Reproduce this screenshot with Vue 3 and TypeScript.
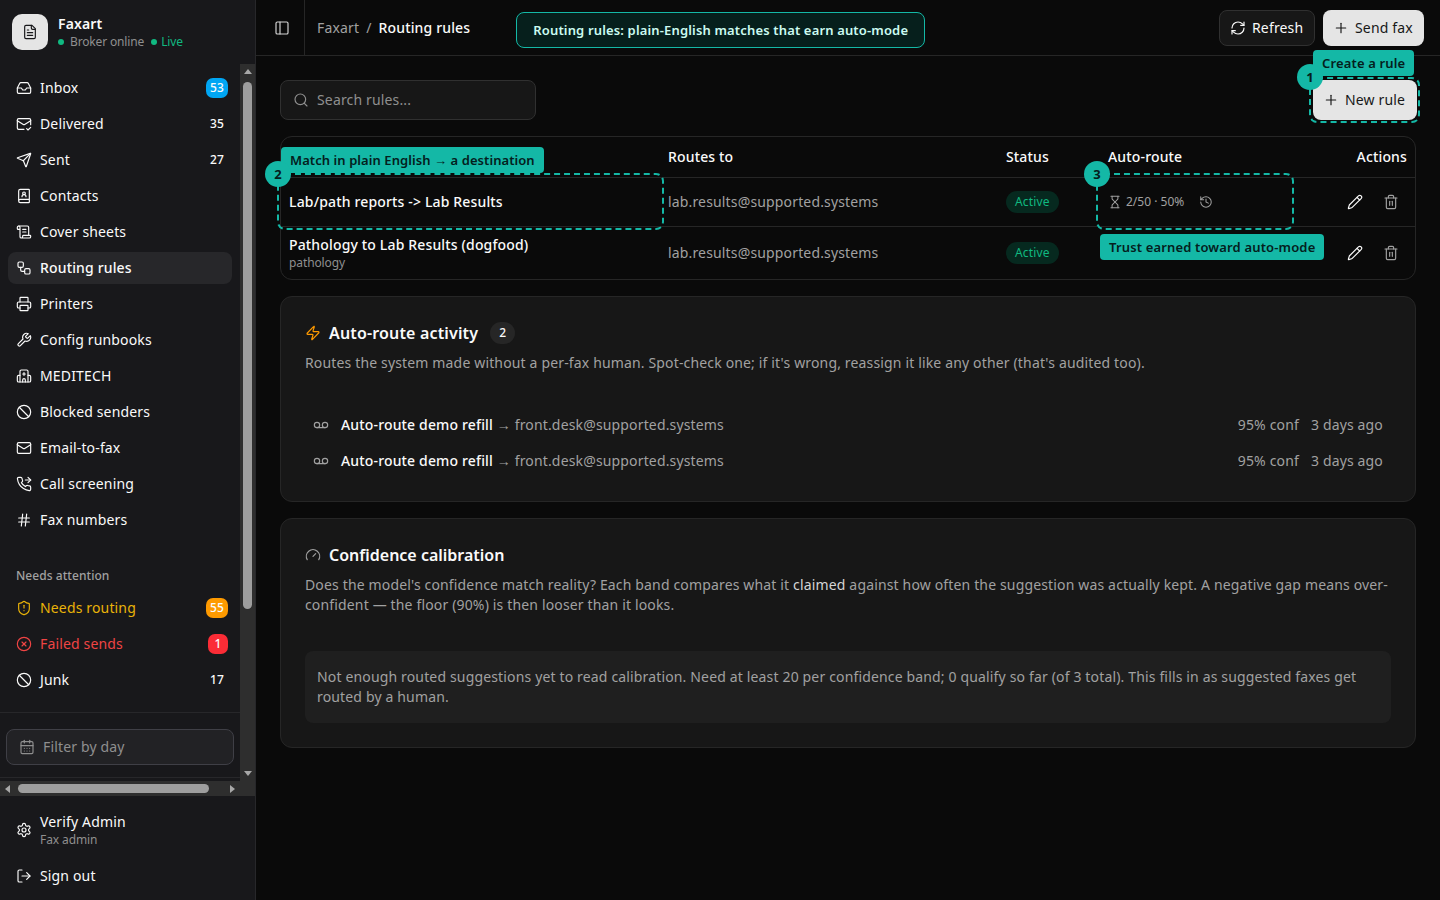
<script setup lang="ts">
const icons: Record<string, string> = {
  file: '<path d="M15 2H6a2 2 0 0 0-2 2v16a2 2 0 0 0 2 2h12a2 2 0 0 0 2-2V7Z"/><path d="M14 2v4a2 2 0 0 0 2 2h4"/><path d="M10 9H8"/><path d="M16 13H8"/><path d="M16 17H8"/>',
  inbox: '<polyline points="22 12 16 12 14 15 10 15 8 12 2 12"/><path d="M5.45 5.11 2 12v6a2 2 0 0 0 2 2h16a2 2 0 0 0 2-2v-6l-3.45-6.89A2 2 0 0 0 16.76 4H7.24a2 2 0 0 0-1.79 1.11z"/>',
  mailCheck: '<path d="M22 13V6a2 2 0 0 0-2-2H4a2 2 0 0 0-2 2v12c0 1.1.9 2 2 2h8"/><path d="m22 7-8.97 5.7a1.94 1.94 0 0 1-2.06 0L2 7"/><path d="m16 19 2 2 4-4"/>',
  send: '<path d="M14.536 21.686a.5.5 0 0 0 .937-.024l6.5-19a.496.496 0 0 0-.635-.635l-19 6.5a.5.5 0 0 0-.024.937l7.93 3.18a2 2 0 0 1 1.112 1.11z"/><path d="m21.854 2.147-10.94 10.939"/>',
  bookUser: '<path d="M15 13a3 3 0 1 0-6 0"/><path d="M4 19.5v-15A2.5 2.5 0 0 1 6.5 2H19a1 1 0 0 1 1 1v18a1 1 0 0 1-1 1H6.5a1 1 0 0 1 0-5H20"/><circle cx="12" cy="8" r="2"/>',
  scroll: '<path d="M15 12h-5"/><path d="M15 8h-5"/><path d="M19 17V5a2 2 0 0 0-2-2H4"/><path d="M8 21h12a2 2 0 0 0 2-2v-1a1 1 0 0 0-1-1H11a1 1 0 0 0-1 1v1a2 2 0 1 1-4 0V5a2 2 0 1 0-4 0v2a1 1 0 0 0 1 1h3"/>',
  workflow: '<rect x="3" y="3" width="8" height="8" rx="2"/><path d="M7 11v4a2 2 0 0 0 2 2h4"/><rect x="13" y="13" width="8" height="8" rx="2"/>',
  printer: '<path d="M6 18H4a2 2 0 0 1-2-2v-5a2 2 0 0 1 2-2h16a2 2 0 0 1 2 2v5a2 2 0 0 1-2 2h-2"/><path d="M6 9V3a1 1 0 0 1 1-1h10a1 1 0 0 1 1 1v6"/><rect x="6" y="14" width="12" height="8" rx="1"/>',
  wrench: '<path d="M14.7 6.3a1 1 0 0 0 0 1.4l1.6 1.6a1 1 0 0 0 1.4 0l3.77-3.77a6 6 0 0 1-7.94 7.94l-6.91 6.91a2.12 2.12 0 0 1-3-3l6.91-6.91a6 6 0 0 1 7.94-7.94l-3.76 3.76z"/>',
  hospital: '<path d="M12 7v4"/><path d="M14 21v-3a2 2 0 0 0-4 0v3"/><path d="M14 9h-4"/><path d="M18 11h2a2 2 0 0 1 2 2v6a2 2 0 0 1-2 2H4a2 2 0 0 1-2-2v-6a2 2 0 0 1 2-2h2"/><path d="M18 21V5a2 2 0 0 0-2-2H8a2 2 0 0 0-2 2v16"/>',
  ban: '<circle cx="12" cy="12" r="10"/><path d="m4.9 4.9 14.2 14.2"/>',
  mail: '<rect x="2" y="4" width="20" height="16" rx="2"/><path d="m22 7-8.97 5.7a1.94 1.94 0 0 1-2.06 0L2 7"/>',
  phone: '<polyline points="18 2 22 6 18 10"/><line x1="14" y1="6" x2="22" y2="6"/><path d="M22 16.92v3a2 2 0 0 1-2.18 2 19.79 19.79 0 0 1-8.63-3.07 19.5 19.5 0 0 1-6-6 19.79 19.79 0 0 1-3.07-8.67A2 2 0 0 1 4.11 2h3a2 2 0 0 1 2 1.72 12.84 12.84 0 0 0 .7 2.81 2 2 0 0 1-.45 2.11L8.09 9.91a16 16 0 0 0 6 6l1.27-1.27a2 2 0 0 1 2.11-.45 12.84 12.84 0 0 0 2.81.7A2 2 0 0 1 22 16.92z"/>',
  hash: '<line x1="4" y1="9" x2="20" y2="9"/><line x1="4" y1="15" x2="20" y2="15"/><line x1="10" y1="3" x2="8" y2="21"/><line x1="16" y1="3" x2="14" y2="21"/>',
  shield: '<path d="M20 13c0 5-3.5 7.5-7.66 8.95a1 1 0 0 1-.67-.01C7.5 20.5 4 18 4 13V6a1 1 0 0 1 1-1c2 0 4.5-1.2 6.24-2.72a1.17 1.17 0 0 1 1.52 0C14.51 3.81 17 5 19 5a1 1 0 0 1 1 1z"/><path d="M12 8v4"/><path d="M12 16h.01"/>',
  circleX: '<circle cx="12" cy="12" r="10"/><path d="m15 9-6 6"/><path d="m9 9 6 6"/>',
  calendar: '<path d="M8 2v4"/><path d="M16 2v4"/><rect x="3" y="4" width="18" height="18" rx="2"/><path d="M3 10h18"/><path d="M8 14h.01"/><path d="M12 14h.01"/><path d="M16 14h.01"/><path d="M8 18h.01"/><path d="M12 18h.01"/><path d="M16 18h.01"/>',
  settings: '<path d="M12.22 2h-.44a2 2 0 0 0-2 2v.18a2 2 0 0 1-1 1.73l-.43.25a2 2 0 0 1-2 0l-.15-.08a2 2 0 0 0-2.73.73l-.22.38a2 2 0 0 0 .73 2.73l.15.1a2 2 0 0 1 1 1.72v.51a2 2 0 0 1-1 1.74l-.15.09a2 2 0 0 0-.73 2.73l.22.38a2 2 0 0 0 2.73.73l.15-.08a2 2 0 0 1 2 0l.43.25a2 2 0 0 1 1 1.73V20a2 2 0 0 0 2 2h.44a2 2 0 0 0 2-2v-.18a2 2 0 0 1 1-1.73l.43-.25a2 2 0 0 1 2 0l.15.08a2 2 0 0 0 2.73-.73l.22-.39a2 2 0 0 0-.73-2.73l-.15-.08a2 2 0 0 1-1-1.74v-.5a2 2 0 0 1 1-1.74l.15-.09a2 2 0 0 0 .73-2.73l-.22-.38a2 2 0 0 0-2.73-.73l-.15.08a2 2 0 0 1-2 0l-.43-.25a2 2 0 0 1-1-1.73V4a2 2 0 0 0-2-2z"/><circle cx="12" cy="12" r="3"/>',
  logout: '<path d="M9 21H5a2 2 0 0 1-2-2V5a2 2 0 0 1 2-2h4"/><polyline points="16 17 21 12 16 7"/><line x1="21" y1="12" x2="9" y2="12"/>',
  panel: '<rect x="3" y="3" width="18" height="18" rx="2"/><path d="M9 3v18"/>',
  refresh: '<path d="M3 12a9 9 0 0 1 9-9 9.75 9.75 0 0 1 6.74 2.74L21 8"/><path d="M21 3v5h-5"/><path d="M21 12a9 9 0 0 1-9 9 9.75 9.75 0 0 1-6.74-2.74L3 16"/><path d="M8 16H3v5"/>',
  plus: '<path d="M5 12h14"/><path d="M12 5v14"/>',
  search: '<path d="m21 21-4.34-4.34"/><circle cx="11" cy="11" r="8"/>',
  hourglass: '<path d="M5 22h14"/><path d="M5 2h14"/><path d="M17 22v-4.172a2 2 0 0 0-.586-1.414L12 12l-4.414 4.414A2 2 0 0 0 7 17.828V22"/><path d="M7 2v4.172a2 2 0 0 0 .586 1.414L12 12l4.414-4.414A2 2 0 0 0 17 6.172V2"/>',
  history: '<path d="M3 12a9 9 0 1 0 9-9 9.75 9.75 0 0 0-6.74 2.74L3 8"/><path d="M3 3v5h5"/><path d="M12 7v5l4 2"/>',
  pencil: '<path d="M21.174 6.812a1 1 0 0 0-3.986-3.987L3.842 16.174a2 2 0 0 0-.5.83l-1.321 4.352a.5.5 0 0 0 .623.622l4.353-1.32a2 2 0 0 0 .83-.497z"/><path d="m15 5 4 4"/>',
  trash: '<path d="M3 6h18"/><path d="M19 6v14c0 1-1 2-2 2H7c-1 0-2-1-2-2V6"/><path d="M8 6V4c0-1 1-2 2-2h4c1 0 2 1 2 2v2"/><line x1="10" y1="11" x2="10" y2="17"/><line x1="14" y1="11" x2="14" y2="17"/>',
  zap: '<path d="M4 14a1 1 0 0 1-.78-1.63l9.9-10.2a.5.5 0 0 1 .86.46l-1.92 6.02A1 1 0 0 0 13 10h7a1 1 0 0 1 .78 1.63l-9.9 10.2a.5.5 0 0 1-.86-.46l1.92-6.02A1 1 0 0 0 11 14z"/>',
  voicemail: '<circle cx="6" cy="12" r="4"/><circle cx="18" cy="12" r="4"/><line x1="6" y1="16" x2="18" y2="16"/>',
  gauge: '<path d="m12 14 4-4"/><path d="M3.34 19a10 10 0 1 1 17.32 0"/>',
}

interface NavItem {
  label: string
  icon: string
  count?: number
  badge?: string
  tone?: string
  active?: boolean
}

const mainNav: NavItem[] = [
  { label: 'Inbox', icon: 'inbox', count: 53, badge: 'blue' },
  { label: 'Delivered', icon: 'mailCheck', count: 35 },
  { label: 'Sent', icon: 'send', count: 27 },
  { label: 'Contacts', icon: 'bookUser' },
  { label: 'Cover sheets', icon: 'scroll' },
  { label: 'Routing rules', icon: 'workflow', active: true },
  { label: 'Printers', icon: 'printer' },
  { label: 'Config runbooks', icon: 'wrench' },
  { label: 'MEDITECH', icon: 'hospital' },
  { label: 'Blocked senders', icon: 'ban' },
  { label: 'Email-to-fax', icon: 'mail' },
  { label: 'Call screening', icon: 'phone' },
  { label: 'Fax numbers', icon: 'hash' },
]

const attentionNav: NavItem[] = [
  { label: 'Needs routing', icon: 'shield', count: 55, badge: 'amber', tone: 'amber' },
  { label: 'Failed sends', icon: 'circleX', count: 1, badge: 'red', tone: 'red' },
  { label: 'Junk', icon: 'ban', count: 17 },
]

const activity = [
  { name: 'Auto-route demo refill', to: 'front.desk@supported.systems', conf: '95% conf', when: '3 days ago' },
  { name: 'Auto-route demo refill', to: 'front.desk@supported.systems', conf: '95% conf', when: '3 days ago' },
]
</script>

<template>
  <div class="app">
    <aside class="sidebar">
      <div class="brand">
        <div class="logo"><svg class="ic" viewBox="0 0 24 24" v-html="icons.file" /></div>
        <div>
          <div class="brand-name">Faxart</div>
          <div class="brand-status">
            <i class="dot" /><span>Broker online</span>
            <i class="dot live-dot" /><span class="live">Live</span>
          </div>
        </div>
      </div>

      <div class="nav-scroll">
        <div class="nav-pane">
          <nav class="nav-list">
            <a v-for="item in mainNav" :key="item.label" class="nav-item" :class="{ active: item.active }">
              <svg class="ic" viewBox="0 0 24 24" v-html="icons[item.icon]" />
              <span class="nav-label">{{ item.label }}</span>
              <span v-if="item.count" class="count" :class="item.badge">{{ item.count }}</span>
            </a>
          </nav>
          <div class="nav-heading">Needs attention</div>
          <nav class="nav-list">
            <a v-for="item in attentionNav" :key="item.label" class="nav-item" :class="item.tone">
              <svg class="ic" viewBox="0 0 24 24" v-html="icons[item.icon]" />
              <span class="nav-label">{{ item.label }}</span>
              <span v-if="item.count" class="count" :class="item.badge">{{ item.count }}</span>
            </a>
          </nav>
          <div class="filter-wrap">
            <div class="filter">
              <svg class="ic" viewBox="0 0 24 24" v-html="icons.calendar" />
              <span>Filter by day</span>
            </div>
          </div>
        </div>
        <!-- the window's own scrollbars -->
        <div class="vbar">
          <span class="sb-btn"><i class="tri up" /></span>
          <div class="vtrack"><div class="vthumb" /></div>
          <span class="sb-btn"><i class="tri down" /></span>
        </div>
        <div class="hbar">
          <span class="sb-btn"><i class="tri left" /></span>
          <div class="htrack"><div class="hthumb" /></div>
          <span class="sb-btn"><i class="tri right" /></span>
        </div>
      </div>

      <div class="sidebar-foot">
        <a class="foot-item user">
          <svg class="ic" viewBox="0 0 24 24" v-html="icons.settings" />
          <div>
            <div class="user-name">Verify Admin</div>
            <div class="user-role">Fax admin</div>
          </div>
        </a>
        <a class="foot-item">
          <svg class="ic" viewBox="0 0 24 24" v-html="icons.logout" />
          <span>Sign out</span>
        </a>
      </div>
    </aside>

    <div class="main">
      <header class="topbar">
        <button class="toggle"><svg class="ic" viewBox="0 0 24 24" v-html="icons.panel" /></button>
        <div class="crumbs">
          <span class="crumb-root">Faxart</span>
          <span class="crumb-sep">/</span>
          <span class="crumb-page">Routing rules</span>
        </div>
        <div class="banner">Routing rules: plain-English matches that earn auto-mode</div>
        <div class="top-actions">
          <button class="btn ghost"><svg class="ic" viewBox="0 0 24 24" v-html="icons.refresh" />Refresh</button>
          <button class="btn light"><svg class="ic" viewBox="0 0 24 24" v-html="icons.plus" />Send fax</button>
        </div>
      </header>

      <main class="content">
        <div class="toolbar">
          <div class="search">
            <svg class="ic" viewBox="0 0 24 24" v-html="icons.search" />
            <span>Search rules...</span>
          </div>
          <div class="new-rule">
            <button class="btn light tall"><svg class="ic" viewBox="0 0 24 24" v-html="icons.plus" />New rule</button>
            <span class="ring ring-btn" />
            <span class="tip tip-1">Create a rule</span>
            <span class="step step-1">1</span>
          </div>
        </div>

        <div class="table-wrap">
          <table class="rules">
            <colgroup>
              <col style="width: 379px" />
              <col style="width: 338px" />
              <col style="width: 102px" />
              <col style="width: 190px" />
              <col />
            </colgroup>
            <thead>
              <tr>
                <th />
                <th>Routes to</th>
                <th>Status</th>
                <th>Auto-route</th>
                <th class="right">Actions</th>
              </tr>
            </thead>
            <tbody>
              <tr class="row-one">
                <td class="anchor">
                  <span class="rule-name">Lab/path reports -&gt; Lab Results</span>
                  <span class="ring ring-row" />
                  <span class="tip tip-2">Match in plain English → a destination</span>
                  <span class="step step-2">2</span>
                </td>
                <td class="muted">lab.results@supported.systems</td>
                <td><span class="pill">Active</span></td>
                <td class="anchor">
                  <div class="trust">
                    <svg class="ic sm" viewBox="0 0 24 24" v-html="icons.hourglass" />
                    <span>2/50 · 50%</span>
                    <svg class="ic sm hist" viewBox="0 0 24 24" v-html="icons.history" />
                  </div>
                  <span class="ring ring-row" />
                  <span class="tip tip-3">Trust earned toward auto-mode</span>
                  <span class="step step-3">3</span>
                </td>
                <td>
                  <div class="row-actions">
                    <svg class="ic" viewBox="0 0 24 24" v-html="icons.pencil" />
                    <svg class="ic dim" viewBox="0 0 24 24" v-html="icons.trash" />
                  </div>
                </td>
              </tr>
              <tr class="row-two">
                <td>
                  <span class="rule-name">Pathology to Lab Results (dogfood)</span>
                  <span class="rule-sub">pathology</span>
                </td>
                <td class="muted">lab.results@supported.systems</td>
                <td><span class="pill">Active</span></td>
                <td />
                <td>
                  <div class="row-actions">
                    <svg class="ic" viewBox="0 0 24 24" v-html="icons.pencil" />
                    <svg class="ic dim" viewBox="0 0 24 24" v-html="icons.trash" />
                  </div>
                </td>
              </tr>
            </tbody>
          </table>
        </div>

        <section class="card activity-card">
          <h2 class="card-title">
            <svg class="ic amber-ic" viewBox="0 0 24 24" v-html="icons.zap" />
            Auto-route activity
            <span class="title-count">2</span>
          </h2>
          <p class="desc">Routes the system made without a per-fax human. Spot-check one; if it's wrong, reassign it like any other (that's audited too).</p>
          <ul class="activity">
            <li v-for="(row, i) in activity" :key="i">
              <svg class="ic dim" viewBox="0 0 24 24" v-html="icons.voicemail" />
              <span class="act-line"><b>{{ row.name }}</b> → {{ row.to }}</span>
              <span class="act-conf">{{ row.conf }}</span>
              <span class="act-when">{{ row.when }}</span>
            </li>
          </ul>
        </section>

        <section class="card">
          <h2 class="card-title">
            <svg class="ic dim" viewBox="0 0 24 24" v-html="icons.gauge" />
            Confidence calibration
          </h2>
          <p class="desc">Does the model's confidence match reality? Each band compares what it <b>claimed</b> against how often the suggestion was actually kept. A negative gap means over-confident — the floor (90%) is then looser than it looks.</p>
          <div class="notice">Not enough routed suggestions yet to read calibration. Need at least 20 per confidence band; 0 qualify so far (of 3 total). This fills in as suggested faxes get routed by a human.</div>
        </section>
      </main>
    </div>
  </div>
</template>

<style>
html,
body {
  margin: 0;
  background: #0a0a0a;
}
</style>

<style scoped>
.app {
  display: flex;
  height: 100vh;
  overflow: hidden;
  background: #0a0a0a;
  color: #fafafa;
  font-family: "Noto Sans", sans-serif;
  font-size: 14px;
  line-height: 20px;
  letter-spacing: 0.011em;
}

.ic {
  width: 16px;
  height: 16px;
  flex: none;
  fill: none;
  stroke: currentColor;
  stroke-width: 1.75;
  stroke-linecap: round;
  stroke-linejoin: round;
}

.ic.sm {
  width: 14px;
  height: 14px;
}

.dim {
  color: #a1a1a1;
}

/* Sidebar */
.sidebar {
  width: 255px;
  flex: none;
  display: flex;
  flex-direction: column;
  background: #18181b;
  border-right: 1px solid #27272a;
}

.brand {
  height: 64px;
  flex: none;
  box-sizing: border-box;
  padding: 14px 12px 0;
  display: flex;
  gap: 10px;
}

.logo {
  width: 36px;
  height: 36px;
  border-radius: 10px;
  background: #e5e5e5;
  color: #18181b;
  display: grid;
  place-items: center;
}

.brand-name {
  font-size: 14px;
  font-weight: 600;
  line-height: 20px;
}

.brand-status {
  display: flex;
  align-items: center;
  font-size: 12px;
  line-height: 16px;
  letter-spacing: -0.15px;
  color: #8f8f8f;
}

.dot {
  width: 6px;
  height: 6px;
  border-radius: 50%;
  background: #10b981;
  margin-right: 6px;
}

.live-dot {
  margin-left: 7px;
  margin-right: 4px;
}

.live {
  color: #10b981;
}

.nav-scroll {
  flex: 1;
  min-height: 0;
  overflow: hidden;
  display: grid;
  grid-template-columns: 240px 15px;
  grid-template-rows: minmax(0, 1fr) 15px;
  background: #2e2e2e;
}

.nav-pane {
  overflow: hidden;
  padding-top: 8px;
  background: #18181b;
}

.vbar {
  grid-column: 2;
  grid-row: 1;
  display: flex;
  flex-direction: column;
}

.hbar {
  grid-column: 1;
  grid-row: 2;
  display: flex;
}

.sb-btn {
  width: 15px;
  height: 15px;
  flex: none;
  display: grid;
  place-items: center;
}

.vtrack {
  flex: 1;
  padding: 3px 3px 0;
}

.vthumb {
  height: 527px;
  border-radius: 5px;
  background: #9e9e9e;
}

.htrack {
  flex: 1;
  padding: 3px 0 0 3px;
}

.hthumb {
  width: 191px;
  height: 9px;
  border-radius: 5px;
  background: #9e9e9e;
}

.tri {
  width: 0;
  height: 0;
  border-style: solid;
  border-color: transparent;
}

.tri.up {
  border-width: 0 4px 5px;
  border-bottom-color: #a8a8a8;
}

.tri.down {
  border-width: 5px 4px 0;
  border-top-color: #a8a8a8;
}

.tri.left {
  border-width: 4px 5px 4px 0;
  border-right-color: #a8a8a8;
}

.tri.right {
  border-width: 4px 0 4px 5px;
  border-left-color: #a8a8a8;
}

.nav-list {
  display: flex;
  flex-direction: column;
  gap: 4px;
  width: 224px;
  margin-left: 8px;
}

.nav-item {
  height: 32px;
  box-sizing: border-box;
  padding: 0 8px;
  border-radius: 8px;
  display: flex;
  align-items: center;
  gap: 8px;
}

.nav-item.active {
  background: #27272a;
  font-weight: 500;
}

.nav-item.amber {
  color: #eab308;
}

.nav-item.red {
  color: #ef4444;
}

.nav-label {
  flex: 1;
}

.count {
  font-size: 12px;
  line-height: 20px;
  font-weight: 500;
  text-align: center;
  color: #fafafa;
}

.count.blue,
.count.amber,
.count.red {
  min-width: 12px;
  padding: 0 4px;
  border-radius: 7px;
  margin-right: -4px;
}

.count.blue {
  background: #00a6f4;
}

.count.amber {
  background: #fe9a00;
}

.count.red {
  background: #fb2c36;
}

.nav-heading {
  height: 32px;
  margin-top: 24px;
  padding-left: 16px;
  font-size: 12px;
  line-height: 32px;
  font-weight: 500;
  letter-spacing: 0.05px;
  color: #a1a1a1;
}

.filter-wrap {
  margin-top: 16px;
  padding: 16px 0 12px 6px;
  border-top: 1px solid #27272a;
  border-bottom: 1px solid #27272a;
}

.filter {
  width: 228px;
  height: 36px;
  box-sizing: border-box;
  padding: 0 12px;
  border: 1px solid #3f3f46;
  border-radius: 8px;
  background: #222225;
  color: #8f8f8f;
  display: flex;
  align-items: center;
  gap: 8px;
}

.sidebar-foot {
  flex: none;
  height: 104px;
  box-sizing: border-box;
  padding-top: 10px;
  padding-left: 8px;
  display: flex;
  flex-direction: column;
  gap: 6px;
}

.foot-item {
  width: 224px;
  box-sizing: border-box;
  padding: 0 8px;
  height: 32px;
  display: flex;
  align-items: center;
  gap: 8px;
}

.foot-item.user {
  height: 48px;
}

.user-name {
  line-height: 20px;
}

.user-role {
  font-size: 12px;
  line-height: 16px;
  letter-spacing: -0.1px;
  color: #8f8f8f;
}

/* Top bar */
.main {
  flex: 1;
  min-width: 0;
  display: flex;
  flex-direction: column;
}

.topbar {
  height: 56px;
  flex: none;
  box-sizing: border-box;
  border-bottom: 1px solid #262626;
  display: flex;
  align-items: center;
  padding-right: 16px;
}

.toggle {
  width: 49px;
  height: 55px;
  box-sizing: border-box;
  padding: 0 0 0 3px;
  border: 0;
  border-right: 1px solid #262626;
  background: none;
  color: #d4d4d4;
  display: grid;
  place-items: center;
}

.crumbs {
  margin-left: 12px;
  display: flex;
  gap: 7px;
}

.crumb-root,
.crumb-sep {
  color: #a1a1a1;
}

.crumb-page {
  font-weight: 500;
}

.banner {
  margin-left: 46px;
  height: 36px;
  box-sizing: border-box;
  padding: 0 16px;
  border: 1px solid #14b8a6;
  border-radius: 8px;
  background: #061f1c;
  color: #ccfbf1;
  font-size: 13px;
  font-weight: 600;
  line-height: 34px;
  white-space: nowrap;
  position: relative;
  top: 2px;
}

.top-actions {
  margin-left: auto;
  display: flex;
  gap: 8px;
  position: relative;
}

.btn {
  height: 36px;
  box-sizing: border-box;
  padding: 0 10px;
  border-radius: 8px;
  border: 1px solid transparent;
  display: flex;
  align-items: center;
  gap: 6px;
  font: inherit;
  letter-spacing: inherit;
  white-space: nowrap;
}

.btn.ghost {
  width: 96px;
  background: #171717;
  border-color: #303030;
  color: #fafafa;
}

.btn.light {
  width: 101px;
  padding: 0 0 0 9px;
  background: #e5e5e5;
  color: #171717;
}

.btn.tall {
  height: 40px;
  width: 104px;
}

/* Content */
.content {
  flex: 1;
  min-height: 0;
  padding: 24px;
  display: flex;
  flex-direction: column;
  gap: 16px;
}

.toolbar {
  display: flex;
  justify-content: space-between;
}

.search {
  width: 256px;
  height: 40px;
  box-sizing: border-box;
  padding: 0 12px;
  border: 1px solid #303030;
  border-radius: 8px;
  background: #171717;
  color: #8f8f8f;
  display: flex;
  align-items: center;
  gap: 8px;
}

.new-rule {
  position: relative;
  margin-right: -1px;
}

.ring {
  position: absolute;
  border: 2px dashed #14b8a6;
  border-radius: 8px;
  pointer-events: none;
}

.ring-btn {
  inset: -3px -3px -3px -4px;
}

.ring-row {
  inset: -5px -4px -4px -4px;
}

.tip {
  position: absolute;
  z-index: 2;
  height: 26px;
  box-sizing: border-box;
  padding: 0 9px;
  border-radius: 4px;
  background: #14b8a6;
  color: #04201d;
  font-size: 13px;
  font-weight: 600;
  line-height: 26px;
  white-space: nowrap;
}

.tip-1 {
  top: -30px;
  left: 0;
}

.tip-2 {
  top: -31px;
  left: 0;
  letter-spacing: 0.07px;
}

.tip-3 {
  top: 56px;
  left: 0;
}

.step {
  position: absolute;
  z-index: 3;
  width: 26px;
  height: 26px;
  border-radius: 50%;
  background: #14b8a6;
  color: #04201d;
  font-size: 13px;
  font-weight: 700;
  line-height: 26px;
  text-align: center;
}

.step-1 {
  top: -16px;
  left: -16px;
}

.step-2 {
  top: -17px;
  left: -16px;
}

.step-3 {
  top: -17px;
  left: -16px;
}

.table-wrap {
  border: 1px solid #262626;
  border-radius: 12px;
}

.rules {
  width: 100%;
  border-collapse: collapse;
  table-layout: fixed;
}

.rules th {
  height: 40px;
  padding: 0 8px;
  text-align: left;
  font-weight: 500;
  border-bottom: 1px solid #262626;
}

.rules th.right {
  text-align: right;
}

.rules td {
  padding: 0 8px;
  vertical-align: middle;
}

.row-one td {
  height: 48px;
  border-bottom: 1px solid #262626;
}

.row-two td {
  height: 52px;
}

.anchor {
  position: relative;
}

.rule-name {
  display: block;
  font-weight: 500;
}

.rule-sub {
  display: block;
  font-size: 12px;
  line-height: 16px;
  letter-spacing: -0.1px;
  color: #8f8f8f;
}

.muted {
  color: #a1a1a1;
}

.pill {
  display: inline-block;
  padding: 0 9px;
  border-radius: 11px;
  background: #06291f;
  color: #10b981;
  font-size: 12px;
  line-height: 22px;
}

.trust {
  display: flex;
  align-items: center;
  gap: 4px;
  font-size: 12px;
  letter-spacing: 0;
  color: #a1a1a1;
}

.hist {
  margin-left: 11px;
}

.row-actions {
  display: flex;
  justify-content: flex-end;
  gap: 20px;
  padding-right: 8px;
}

.card {
  border: 1px solid #262626;
  border-radius: 12px;
  background: #171717;
  padding: 24px;
}

.activity-card {
  padding-bottom: 22px;
}

.activity-card .card-title {
  letter-spacing: 0.16px;
}

.card-title {
  margin: 0;
  display: flex;
  align-items: center;
  gap: 8px;
  font-size: 16px;
  line-height: 24px;
  font-weight: 600;
  letter-spacing: 0;
}

.amber-ic {
  color: #fe9a00;
}

.title-count {
  margin-left: 4px;
  min-width: 25px;
  height: 22px;
  border-radius: 11px;
  background: #262626;
  font-size: 12px;
  font-weight: 500;
  line-height: 22px;
  text-align: center;
}

.desc {
  margin: 8px 0 0;
  color: #a1a1a1;
}

.desc b {
  font-weight: 400;
  color: #d4d4d4;
}

.activity {
  list-style: none;
  margin: 34px 0 0;
  padding: 0 8px;
}

.activity li {
  height: 36px;
  display: flex;
  align-items: center;
}

.act-line {
  margin-left: 12px;
  color: #a1a1a1;
}

.act-line b {
  font-weight: 500;
  color: #fafafa;
}

.act-conf {
  margin-left: auto;
  color: #a1a1a1;
}

.act-when {
  margin-left: 12px;
  color: #a1a1a1;
}

.notice {
  margin-top: 36px;
  padding: 16px 12px;
  border-radius: 8px;
  background: #1f1f1f;
  color: #a1a1a1;
}
</style>
